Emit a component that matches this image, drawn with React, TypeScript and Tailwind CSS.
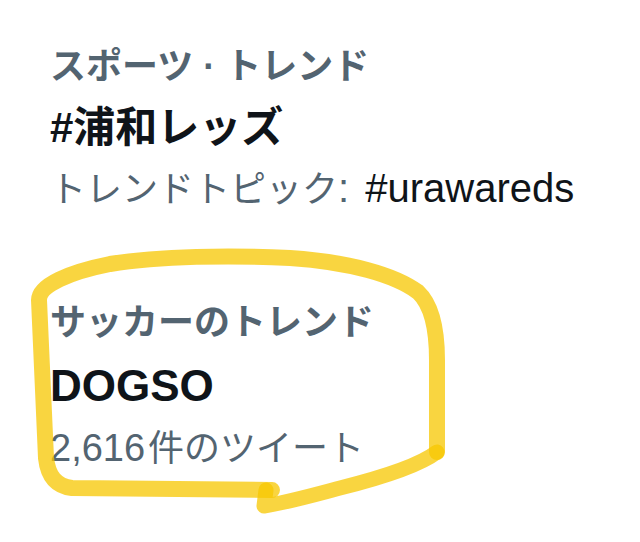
export default function App() {
  const font = { fontFamily: '"Liberation Sans", "Noto Sans CJK JP", sans-serif' };

  return (
    <div className="relative w-[640px] h-[542px] bg-white overflow-hidden" style={font}>
      <div className="flex flex-col pl-[50px] pt-[36px]">
        <div className="flex flex-col">
          <div className="text-[36px] leading-[61px] font-bold text-[#536471]">スポーツ · トレンド</div>
          <div className="text-[42px] leading-[61px] font-bold text-[#0f1419]">#浦和レッズ</div>
          <div className="text-[36px] leading-[61px] text-[#536471]">
            トレンドトピック<span className="text-[40px]">: </span>
            <span className="ml-[5px] text-[40px] text-[#0f1419]">#urawareds</span>
          </div>
        </div>

        <div className="flex flex-col mt-[72px]">
          <div className="text-[36px] leading-[62px] font-bold text-[#536471]">サッカーのトレンド</div>
          <div className="text-[44px] leading-[64px] font-bold text-[#0f1419]">DOGSO</div>
          <div className="text-[36px] leading-[60px] text-[#536471]">
            <span className="text-[38px] mr-[3px]">2,616</span>件のツイート
          </div>
        </div>
      </div>

      {/* hand drawn highlighter loop */}
      <svg className="absolute inset-0 pointer-events-none" width="640" height="542" viewBox="0 0 640 542">
        <path
          d="M 272 490 L 72 488 C 56 486 48 476 46 458 L 39 300 C 39 285 70 272 110 264 C 160 256 230 255 290 258 C 350 262 395 275 418 292 C 432 305 437 330 437 360 L 437 452"
          fill="none"
          stroke="#f7c700"
          strokeOpacity="0.75"
          strokeWidth="16"
          strokeLinecap="round"
          strokeLinejoin="round"
        />
        <path
          d="M 437 452 C 420 465 380 478 340 488 C 310 496 285 503 264 506 L 266 490"
          fill="none"
          stroke="#f7c700"
          strokeOpacity="0.75"
          strokeWidth="15"
          strokeLinecap="round"
          strokeLinejoin="round"
        />
      </svg>
    </div>
  );
}
